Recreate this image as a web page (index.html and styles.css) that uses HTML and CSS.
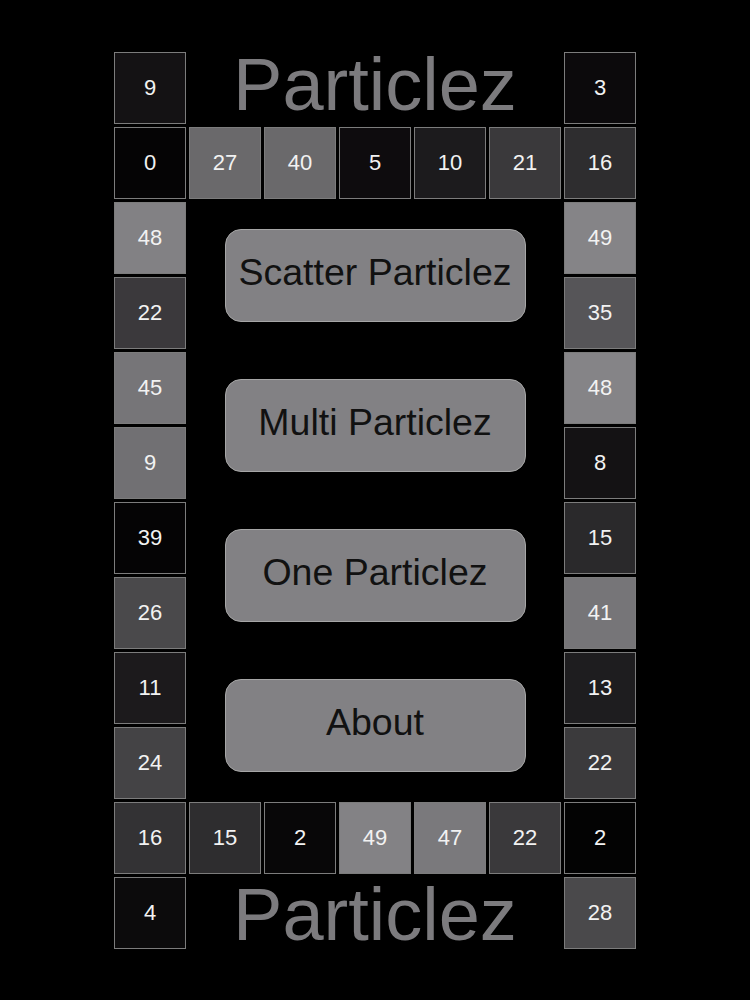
FILE: index.html
```html
<!DOCTYPE html>
<html>
<head>
<meta charset="utf-8">
<link rel="stylesheet" href="styles.css">
</head>
<body>
<div class="board">
  <div class="cell" style="background:#141214">9</div>
  <div class="title title-top">Particlez</div>
  <div class="cell" style="background:#0c0a0c">3</div>

  <div class="cell" style="background:#050405">0</div>
  <div class="cell" style="background:#6a696b">27</div>
  <div class="cell" style="background:#6a696b">40</div>
  <div class="cell" style="background:#0e0c0e">5</div>
  <div class="cell" style="background:#1c1b1d">10</div>
  <div class="cell" style="background:#3a393b">21</div>
  <div class="cell" style="background:#2e2d2f">16</div>

  <div class="cell left" style="background:#828184; grid-row:3">48</div>
  <div class="cell left" style="background:#3b393c; grid-row:4">22</div>
  <div class="cell left" style="background:#767578; grid-row:5">45</div>
  <div class="cell left" style="background:#717073; grid-row:6">9</div>
  <div class="cell left" style="background:#050405; grid-row:7">39</div>
  <div class="cell left" style="background:#4a494b; grid-row:8">26</div>
  <div class="cell left" style="background:#1c1a1c; grid-row:9">11</div>
  <div class="cell left" style="background:#444345; grid-row:10">24</div>

  <div class="menu">
    <div class="btn">Scatter Particlez</div>
    <div class="btn">Multi Particlez</div>
    <div class="btn">One Particlez</div>
    <div class="btn">About</div>
  </div>

  <div class="cell right" style="background:#858487; grid-row:3">49</div>
  <div class="cell right" style="background:#565558; grid-row:4">35</div>
  <div class="cell right" style="background:#858487; grid-row:5">48</div>
  <div class="cell right" style="background:#141214; grid-row:6">8</div>
  <div class="cell right" style="background:#2a292b; grid-row:7">15</div>
  <div class="cell right" style="background:#767578; grid-row:8">41</div>
  <div class="cell right" style="background:#1e1d1f; grid-row:9">13</div>
  <div class="cell right" style="background:#3b3a3c; grid-row:10">22</div>

  <div class="cell row11" style="background:#333234">16</div>
  <div class="cell row11" style="background:#2e2d2f">15</div>
  <div class="cell row11" style="background:#080708">2</div>
  <div class="cell row11" style="background:#838285">49</div>
  <div class="cell row11" style="background:#7a797c">47</div>
  <div class="cell row11" style="background:#3a393b">22</div>
  <div class="cell row11" style="background:#030303">2</div>

  <div class="cell" style="background:#0c0b0c">4</div>
  <div class="title title-bottom">Particlez</div>
  <div class="cell" style="background:#4a494b">28</div>
</div>
</body>
</html>
```

FILE: styles.css
```css
html, body {
  margin: 0;
  padding: 0;
  background: #000;
  width: 750px;
  height: 1000px;
  overflow: hidden;
  font-family: "Liberation Sans", Arial, sans-serif;
}

.board {
  display: grid;
  grid-template-columns: repeat(7, 72px);
  grid-template-rows: repeat(12, 72px);
  gap: 3px;
  width: 522px;
  margin: 52px 0 0 114px;
}

.cell {
  box-sizing: border-box;
  border: 1px solid #7c7c7c;
  color: #f2f2f2;
  font-size: 22px;
  display: flex;
  align-items: center;
  justify-content: center;
}

.left { grid-column: 1; }
.right { grid-column: 7; }
.row11 { grid-row: 11; }

.title {
  grid-column: 2 / 7;
  color: #7c7b7e;
  font-size: 74px;
  display: flex;
  align-items: center;
  justify-content: center;
  line-height: 1;
}

.title-top {
  padding-bottom: 7px;
}

.title-bottom {
  padding-top: 4px;
}

.menu {
  grid-column: 2 / 7;
  grid-row: 3 / 11;
  display: flex;
  flex-direction: column;
  align-items: center;
  gap: 57px;
  padding-top: 27px;
}

.btn {
  box-sizing: border-box;
  width: 301px;
  height: 93px;
  background: #828184;
  border: 1px solid #a6a6a6;
  border-radius: 16px;
  color: #111;
  font-size: 37.5px;
  display: flex;
  align-items: center;
  justify-content: center;
  padding-bottom: 7px;
}
```
